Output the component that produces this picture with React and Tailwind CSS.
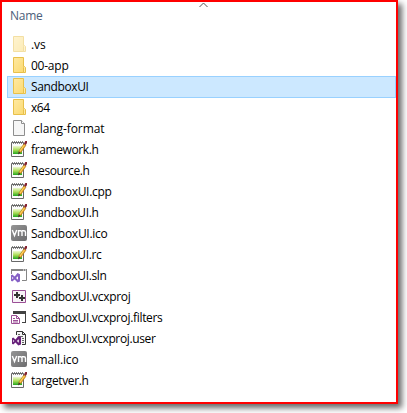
import React from 'react';

const Folder = ({ faded }) => (
  <svg width="16" height="16" className={faded ? 'opacity-50' : ''}>
    <defs>
      <linearGradient id="fold" x1="0" y1="0" x2="1" y2="1">
        <stop offset="0" stopColor="#ffe9a2" />
        <stop offset="1" stopColor="#fbd96f" />
      </linearGradient>
    </defs>
    <path d="M2.5 .5h10v9l1 1v5h-11z" fill="url(#fold)" stroke="#e8c04a" />
    <path d="M12.5 15.5v-5l1-1 1 1v5z" fill="#ffe9a2" stroke="#e8c04a" />
  </svg>
);

const Blank = () => (
  <svg width="16" height="16">
    <path d="M2.5 .5h8l3 3v12h-11z" fill="#f6f6f6" stroke="#8e8e8e" />
    <path d="M10.5 .5v3h3" fill="#fff" stroke="#8e8e8e" />
  </svg>
);

const Note = () => (
  <svg width="16" height="16">
    <defs>
      <linearGradient id="leaf" x1="0" y1="0" x2="0" y2="1">
        <stop offset="0" stopColor="#eef8d0" />
        <stop offset=".5" stopColor="#a9dc55" />
        <stop offset="1" stopColor="#21a51f" />
      </linearGradient>
    </defs>
    <path d="M.5 1.5h12v14H.5z" fill="#fbfbfb" stroke="#686868" />
    <path d="M1 .5h11M2 2.5h10" stroke="#888" strokeDasharray="1 1" />
    <path d="M2 5h9v8H2z" fill="url(#leaf)" />
    <path d="M7.5 12.5l.8-3L13 2.8l2 1.4-5 7z" fill="#f0a92c" stroke="#a8701b" strokeWidth=".6" />
    <path d="M9 10l4.3-6" stroke="#ffdf70" strokeWidth=".9" />
    <path d="M13 2.5l1.3-2.5H16v2l-1.3 2z" fill="#842331" />
    <path d="M7 13.5l.8-3 1.7 1.3z" fill="#333" />
  </svg>
);

const Vm = () => (
  <svg width="16" height="16">
    <defs>
      <linearGradient id="metal" x1="0" y1="0" x2="1" y2="1">
        <stop offset="0" stopColor="#959595" />
        <stop offset="1" stopColor="#6c6c6e" />
      </linearGradient>
    </defs>
    <rect width="16" height="16" rx="2" fill="url(#metal)" />
    <path d="M1.3 5l2.2 5.5L5.7 5M7.5 11V5.7h2q1.5 0 1.5 1.5V11M11 5.7h2q1.5 0 1.5 1.5V11" fill="none" stroke="#fff" strokeWidth="1.4" />
  </svg>
);

const Solution = () => (
  <svg width="16" height="16">
    <path d="M.5 7V2.5h15v11H11" fill="none" stroke="#858585" />
    <path d="M0 2h16v2H0z" fill="#858585" />
    <path d="M12 3h1m1 0h1" stroke="#fff" />
    <path fillRule="evenodd" d="M6.5 6L9 7.2v7.3L6.5 15.5 3.7 12.6 1.2 14.4 0 13.7V8.2l1.2-.7 2.5 2L6.5 6zM7 9.2l-2 1.7 2 1.8zM1.2 9.7v2.6l1.3-1.3z" fill="#8661c5" />
  </svg>
);

const Project = () => (
  <svg width="16" height="16">
    <path d="M1.5 2.5h13v12h-13z" fill="#f7f2f7" stroke="#9b4f96" />
    <path d="M5 4h2v2h2v2H7v2H5V8H3V6h2zM10 7h2v2h2v2h-2v2h-2v-2H8V9h2z" fill="#333" />
    <path d="M7 8h1v1H7z" fill="#aaa" />
  </svg>
);

const Filters = () => (
  <svg width="16" height="16">
    <path d="M2 2h13v3H2zM14 5h1v9h-4v-1h3z" fill="#424242" />
    <path d="M.5 6.5h5l3 3v5h-8z" fill="#fff" stroke="#9b4f96" />
    <path d="M5.5 6.5v3h3M2 9.5h2M2 11.5h5M2 13h5" fill="none" stroke="#9b4f96" />
  </svg>
);

const User = () => (
  <svg width="16" height="16">
    <path d="M5.5 5V1.5h6l3 3v10H11" fill="#f5f5f5" stroke="#333" />
    <path d="M11.5 1.5v3h3" fill="none" stroke="#333" />
    <path d="M7 4.5h2M8 6.5h4M11 8.5h2M11 10.5h2M11 12.5h2" stroke="#666" />
    <path fillRule="evenodd" d="M7.3 6L10 7.2v7.3l-2.7 1L4.5 12.6 2.2 14.4 1 13.7V8.2l1.2-.7 2.3 2L7.3 6zM7.8 9.2l-1.9 1.7 1.9 1.8zM2.2 9.7v2.6l1.2-1.3z" fill="#68217a" />
  </svg>
);

const FadedFolder = () => <Folder faded />;

const files = [
  [FadedFolder, '.vs', 14],
  [Folder, '00-app', 37],
  [Folder, 'SandboxUI', 57],
  [Folder, 'x64', 18],
  [Blank, '.clang-format', 73],
  [Note, 'framework.h', 67],
  [Note, 'Resource.h', 58],
  [Note, 'SandboxUI.cpp', 80],
  [Note, 'SandboxUI.h', 67],
  [Vm, 'SandboxUI.ico', 76],
  [Note, 'SandboxUI.rc', 70],
  [Solution, 'SandboxUI.sln', 75],
  [Project, 'SandboxUI.vcxproj', 99],
  [Filters, 'SandboxUI.vcxproj.filters', 131],
  [User, 'SandboxUI.vcxproj.user', 124],
  [Vm, 'small.ico', 47],
  [Note, 'targetver.h', 57],
];

function Label({ text, width }) {
  const ref = React.useRef(null);
  React.useLayoutEffect(() => {
    const el = ref.current;
    el.style.letterSpacing = '0px';
    const natural = el.getBoundingClientRect().width;
    el.style.letterSpacing = `${(width + 0.5 - natural) / text.length}px`;
  }, [text, width]);
  return <span ref={ref} className="inline-block whitespace-pre">{text}</span>;
}

export default function App() {
  return (
    <div className="h-[413px] w-[407px] overflow-hidden bg-white font-['Open_Sans','Noto_Sans',sans-serif] text-[12px] text-black">
      <div className="h-[404px] w-[398px] border-2 border-[#ff0000] bg-white shadow-[4px_4px_6px_0px_rgba(0,0,0,0.6)]">
        <div className="flex h-8 flex-col">
          <div className="flex h-[6px] justify-center pl-[9px]">
            <svg width="9" height="6"><path d="M.5 5L4.5 1l4 4" fill="none" stroke="#555" /></svg>
          </div>
          <div className="pl-2 leading-[16px] text-[#4c607a]"><Label text="Name" width={32} /></div>
        </div>
        {files.map(([Icon, text, width], i) => (
          <div
            key={text}
            className={`ml-[5px] flex items-start border pl-[3px] ${i === 2 ? '-mb-px h-[22px] border-[#99d1ff] bg-[#cce8ff]' : 'h-[21px] border-transparent'}`}
          >
            <span className="mt-px block h-4 w-4 [&>svg]:block"><Icon /></span>
            <span className="ml-1 leading-[20px]"><Label text={text} width={width} /></span>
          </div>
        ))}
      </div>
    </div>
  );
}
